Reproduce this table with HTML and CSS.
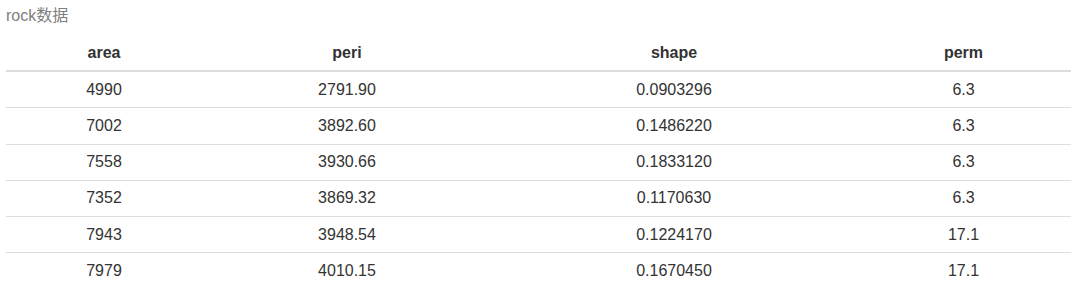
FILE: index.html
```html
<!DOCTYPE html>
<html lang="zh">
<head>
<meta charset="utf-8">
<title>rock数据</title>
<link rel="stylesheet" href="styles.css">
</head>
<body>
<div class="wrap">
<table class="table">
<caption>rock数据</caption>
<colgroup>
<col class="c1"><col class="c2"><col class="c3"><col class="c4">
</colgroup>
<thead>
<tr><th>area</th><th>peri</th><th>shape</th><th>perm</th></tr>
</thead>
<tbody>
<tr><td>4990</td><td>2791.90</td><td>0.0903296</td><td>6.3</td></tr>
<tr><td>7002</td><td>3892.60</td><td>0.1486220</td><td>6.3</td></tr>
<tr><td>7558</td><td>3930.66</td><td>0.1833120</td><td>6.3</td></tr>
<tr><td>7352</td><td>3869.32</td><td>0.1170630</td><td>6.3</td></tr>
<tr><td>7943</td><td>3948.54</td><td>0.1224170</td><td>17.1</td></tr>
<tr><td>7979</td><td>4010.15</td><td>0.1670450</td><td>17.1</td></tr>
</tbody>
</table>
</div>
</body>
</html>
```
FILE: styles.css
```css
html, body {
  margin: 0;
  padding: 0;
  background: #fff;
}
body {
  font-family: "Liberation Sans", Arial, "Noto Sans CJK SC", sans-serif;
  font-size: 16px;
  color: #333;
}
.wrap {
  padding: 0 9px 0 6px;
}
.table {
  width: 100%;
  border-collapse: collapse;
  border-spacing: 0;
  table-layout: fixed;
}
.table caption {
  caption-side: top;
  text-align: left;
  color: #808080;
  padding: 6px 0 8px;
  line-height: 20px;
}
.c1 { width: 196px; }
.c2 { width: 290px; }
.c3 { width: 364px; }
.c4 { width: 215px; }
.table th {
  font-weight: bold;
  text-align: center;
  line-height: 20px;
  padding: 9px 8px 7px;
  border-bottom: 2px solid #ddd;
}
.table td {
  text-align: center;
  line-height: 20px;
  padding: 7.65px 8px;
  border-top: 1px solid #ddd;
}
.table tbody tr:first-child td {
  border-top: 0;
}
```
